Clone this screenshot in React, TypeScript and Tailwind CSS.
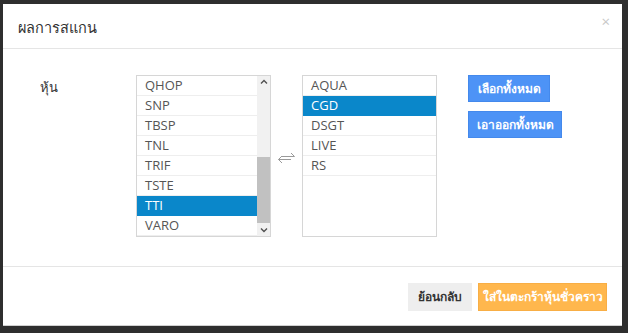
const leftItems = ["QHOP", "SNP", "TBSP", "TNL", "TRIF", "TSTE", "TTI", "VARO"];
const rightItems = ["AQUA", "CGD", "DSGT", "LIVE", "RS"];

function ListRow({ label, selected }: { label: string; selected?: boolean }) {
  return (
    <div
      className={
        "h-[20px] pl-[8px] text-[13px] leading-[19px] border-b " +
        (selected ? "bg-[#0a87ca] text-white border-[#0a87ca]" : "text-[#555] border-[#eeeeee]")
      }
    >
      {label}
    </div>
  );
}

function SwapIcon() {
  return (
    <svg width="19" height="12" viewBox="0 0 19 12" fill="none" stroke="#9a9a9a" strokeWidth="1">
      <path d="M5 4.5h12.5M14 1l3.5 3.5" />
      <path d="M1.5 7.5h12.5M1.5 7.5l3.5 3.5M1.5 7.5l3.5-3.5" />
    </svg>
  );
}

export default function App() {
  return (
    <div
      className="w-[628px] h-[333px] bg-[#2e2e2e] pt-[4px] pl-[3px]"
      style={{ fontFamily: '"Open Sans", "Noto Sans", Tahoma, sans-serif' }}
    >
      <div className="w-[619px] h-[322px] bg-white flex flex-col border-b border-[#d0d0d0]">
        <div className="h-[45px] border-b border-[#e5e5e5] flex items-center justify-between pl-[15px] pr-[12px]">
          <div className="text-[14.5px] text-[#333] pt-[3px]">ผลการสแกน</div>
          <div className="text-[15px] leading-[15px] text-[#c8c8c8] self-start mt-[10px]">×</div>
        </div>

        <div className="flex items-start pt-[26px] pl-[37px] h-[218px] border-b border-[#e5e5e5]">
          <div className="w-[96px] text-[13px] text-[#333] pt-[3px]">หุ้น</div>

          <div className="w-[135px] h-[162px] border border-[#d6d6d6] flex">
            <div className="flex-1">
              {leftItems.map((it) => (
                <ListRow key={it} label={it} selected={it === "TTI"} />
              ))}
            </div>
            <div className="w-[13px] bg-[#f1f1f1] flex flex-col items-center">
              <div className="h-[81px] w-full flex justify-center pt-[3px]">
                <svg width="8" height="6" viewBox="0 0 8 6" fill="none" stroke="#505050" strokeWidth="1.4">
                  <path d="M1 4.5l3-3 3 3" />
                </svg>
              </div>
              <div className="h-[66px] w-full bg-[#c1c1c1]" />
              <div className="flex-1 w-full flex justify-center items-center">
                <svg width="8" height="6" viewBox="0 0 8 6" fill="none" stroke="#505050" strokeWidth="1.4">
                  <path d="M1 1.5l3 3 3-3" />
                </svg>
              </div>
            </div>
          </div>

          <div className="w-[31px] h-[162px] flex items-center justify-center pt-[4px]">
            <SwapIcon />
          </div>

          <div className="w-[135px] h-[162px] border border-[#d6d6d6]">
            {rightItems.map((it) => (
              <ListRow key={it} label={it} selected={it === "CGD"} />
            ))}
          </div>

          <div className="ml-[31px] flex flex-col items-start gap-[9px]">
            <button className="h-[27px] w-[82px] bg-[#4d93f6] border border-[#4489ec] text-white text-[12px] font-semibold">
              เลือกทั้งหมด
            </button>
            <button className="h-[27px] w-[94px] bg-[#4d93f6] border border-[#4489ec] text-white text-[12px] font-semibold">
              เอาออกทั้งหมด
            </button>
          </div>
        </div>

        <div className="flex-1 flex justify-end items-start pt-[16px] pr-[15px] gap-[6px]">
          <button className="h-[28px] w-[64px] bg-[#eeeeee] text-[#333] text-[12px] font-semibold">
            ย้อนกลับ
          </button>
          <button className="h-[28px] w-[129px] bg-[#ffb74d] border border-[#f8ae45] text-white text-[12px] font-semibold">
            ใส่ในตะกร้าหุ้นชั่วคราว
          </button>
        </div>
      </div>
    </div>
  );
}
